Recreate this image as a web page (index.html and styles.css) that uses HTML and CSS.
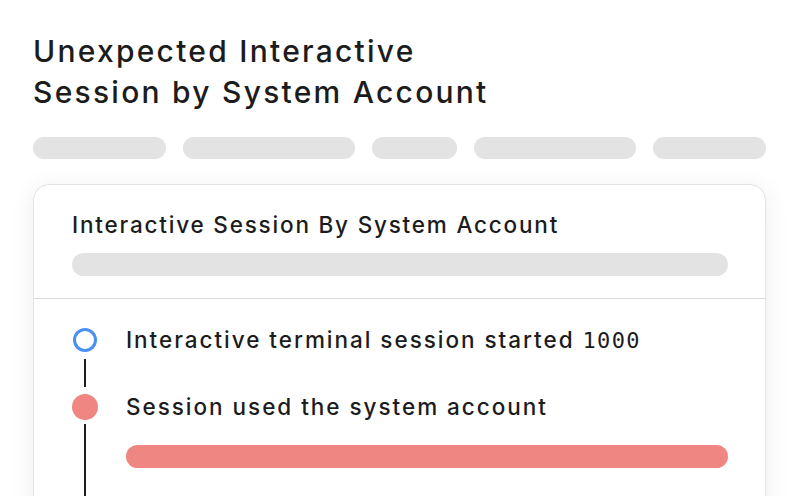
FILE: index.html
```html
<!DOCTYPE html>
<html>
<head>
<meta charset="utf-8">
<link rel="stylesheet" href="styles.css">
</head>
<body>
<div class="page">
  <h1 class="title">Unexpected Interactive<br>Session by System Account</h1>
  <div class="pills">
    <span class="pill p1"></span>
    <span class="pill p2"></span>
    <span class="pill p3"></span>
    <span class="pill p4"></span>
    <span class="pill p5"></span>
  </div>
  <div class="card">
    <div class="card-head">
      <div class="card-title">Interactive Session By System Account</div>
      <div class="bar grey"></div>
    </div>
    <div class="timeline">
      <div class="item">
        <div class="rail">
          <span class="dot ring"></span>
          <span class="line short"></span>
        </div>
        <div class="content">
          <div class="label">Interactive terminal session started <span class="mono">1000</span></div>
        </div>
      </div>
      <div class="item">
        <div class="rail">
          <span class="dot fill"></span>
          <span class="line long"></span>
        </div>
        <div class="content">
          <div class="label tall">Session used the system account</div>
          <div class="bar red"></div>
        </div>
      </div>
    </div>
  </div>
</div>
</body>
</html>
```
FILE: styles.css
```css
html, body {
  margin: 0;
  padding: 0;
  background: #ffffff;
  overflow: hidden;
}
body {
  width: 800px;
  height: 496px;
  font-family: "Inter", "Noto Sans", sans-serif;
  color: #1c1c1c;
}
.page {
  padding: 31px 0 0 33px;
}
.title {
  margin: 0;
  font-size: 30px;
  font-weight: 500;
  line-height: 41px;
  letter-spacing: 2.25px;
}
.pills {
  display: flex;
  gap: 17px;
  margin-top: 24px;
  width: 734px;
}
.pill {
  display: block;
  height: 22px;
  border-radius: 11px;
  background: #e3e3e3;
}
.p1 { width: 133px; }
.p2 { width: 172px; }
.p3 { width: 85px; }
.p4 { width: 162px; }
.p5 { width: 113px; }
.card {
  margin-top: 25px;
  width: 731px;
  height: 340px;
  border: 1px solid #e4e4e4;
  border-radius: 16px;
  background: #fff;
  box-shadow: 0 4px 24px rgba(0, 0, 0, 0.08);
}
.card-head {
  padding: 24px 37px 22px 38px;
  border-bottom: 1px solid #d9d9d9;
}
.card-title {
  font-size: 22.5px;
  font-weight: 500;
  line-height: 32px;
  letter-spacing: 1.8px;
}
.bar {
  height: 23px;
  border-radius: 12px;
}
.bar.grey {
  margin-top: 12px;
  background: #e3e3e3;
}
.bar.red {
  margin-top: 25px;
  background: #f08682;
}
.timeline {
  padding: 29px 37px 0 38px;
  display: flex;
  flex-direction: column;
}
.item {
  display: flex;
  gap: 28px;
}
.rail {
  width: 26px;
  flex: none;
  display: flex;
  flex-direction: column;
  align-items: center;
}
.dot {
  display: block;
  box-sizing: border-box;
  border-radius: 50%;
}
.dot.ring {
  width: 24px;
  height: 24px;
  border: 3px solid #4a8ff2;
}
.dot.fill {
  width: 26px;
  height: 26px;
  background: #f08682;
}
.line {
  display: block;
  width: 2px;
  background: #1c1c1c;
}
.line.short {
  height: 28px;
  margin-top: 7px;
  margin-bottom: 7px;
}
.line.long {
  height: 80px;
  margin-top: 4px;
}
.content {
  flex: 1;
}
.label {
  font-size: 22.5px;
  font-weight: 500;
  line-height: 24px;
  letter-spacing: 1.97px;
  white-space: nowrap;
}
.label.tall {
  line-height: 26px;
}
.mono {
  font-family: "DejaVu Sans Mono", monospace;
  font-weight: 400;
  font-size: 22px;
  letter-spacing: 1.3px;
}
```
